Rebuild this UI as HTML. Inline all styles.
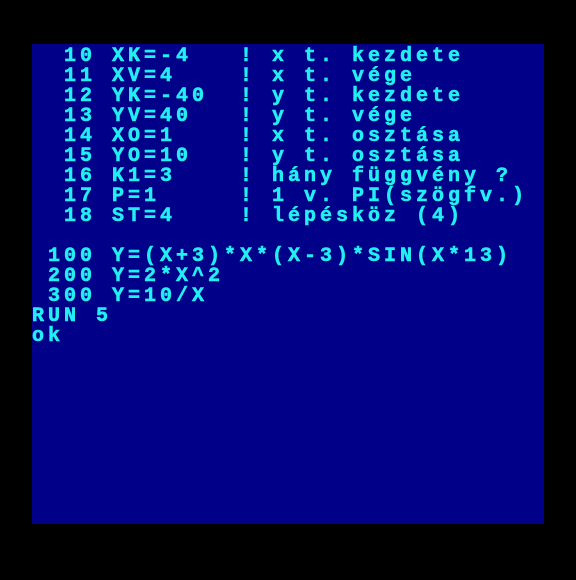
<!DOCTYPE html>
<html><head><meta charset="utf-8"><style>
html,body{margin:0;padding:0;background:#000;width:576px;height:580px;overflow:hidden}
#s{position:absolute;left:32px;top:44px;width:512px;height:480px;background:#000088}
pre{margin:0;position:absolute;left:0;top:3px;font-family:"Liberation Mono",monospace;font-weight:bold;font-size:20px;line-height:20px;letter-spacing:4px;color:#22eef4;-webkit-text-stroke:0.6px #22eef4}
</style></head><body><div id="s"><pre>  10 XK=-4   ! x t. kezdete
  11 XV=4    ! x t. vége
  12 YK=-40  ! y t. kezdete
  13 YV=40   ! y t. vége
  14 XO=1    ! x t. osztása
  15 YO=10   ! y t. osztása
  16 K1=3    ! hány függvény ?
  17 P=1     ! 1 v. PI(szögfv.)
  18 ST=4    ! lépésköz (4)

 100 Y=(X+3)*X*(X-3)*SIN(X*13)
 200 Y=2*X^2
 300 Y=10/X
RUN 5
ok</pre></div></body></html>
